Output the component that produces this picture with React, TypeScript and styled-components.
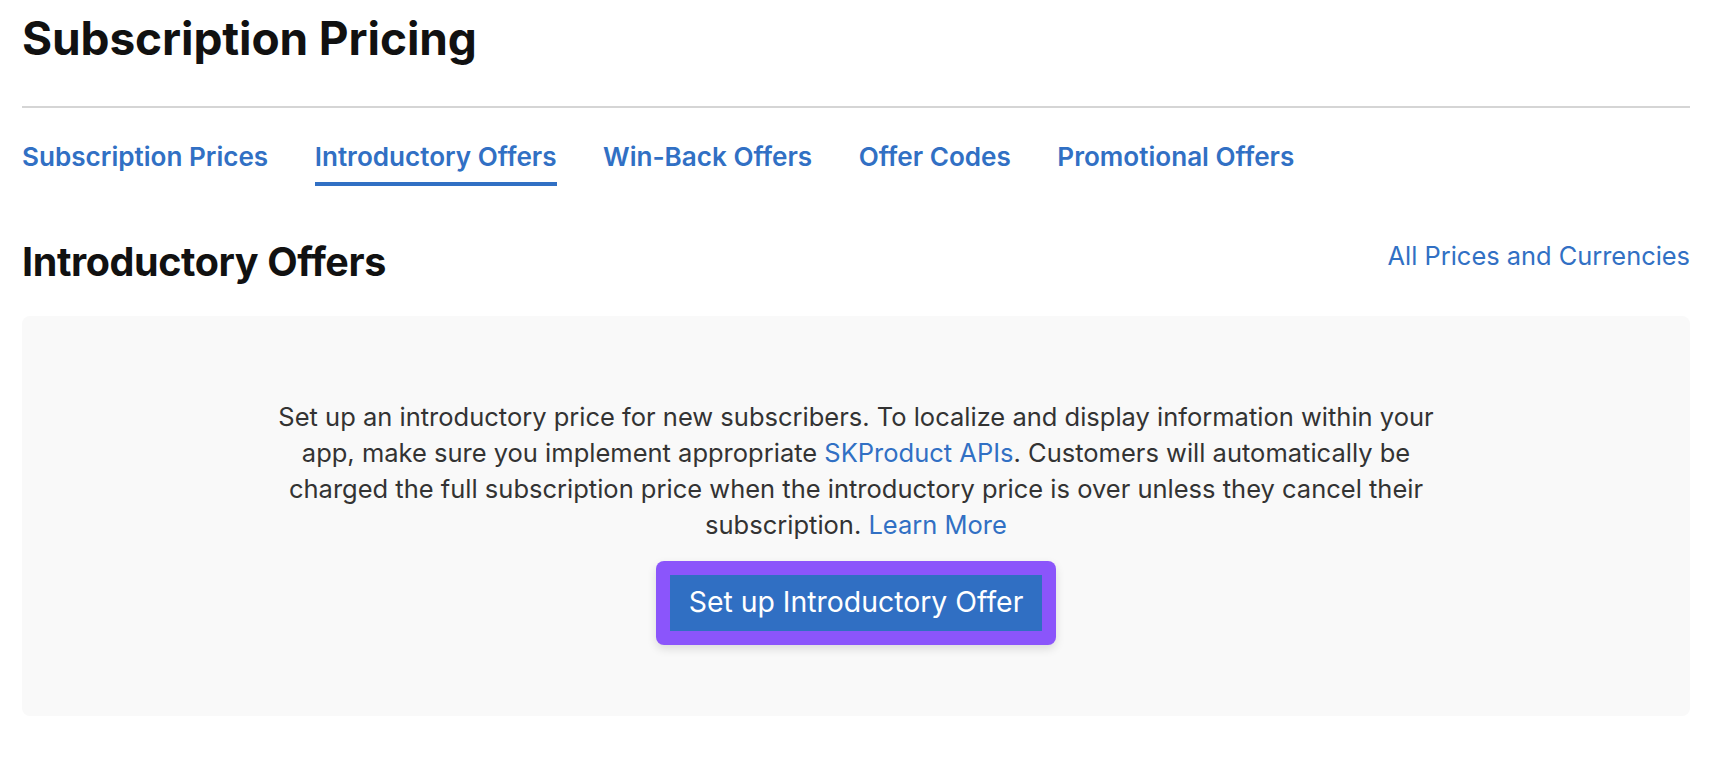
import styled, { createGlobalStyle } from "styled-components";

const GlobalStyle = createGlobalStyle`
  body {
    margin: 0;
    background: #ffffff;
    font-family: Inter, "Noto Sans", "Liberation Sans", sans-serif;
    -webkit-font-smoothing: antialiased;
  }
`;

const BLUE = "#3170c4";

const Page = styled.main`
  padding: 10px 32px 0 22px;
`;

const PageTitle = styled.h1`
  margin: 0;
  font-size: 46px;
  line-height: 56px;
  font-weight: 700;
  letter-spacing: -0.1px;
  color: #111111;
  padding-bottom: 40px;
  border-bottom: 2px solid #d5d5d5;
`;

const Tabs = styled.nav`
  display: flex;
  gap: 46.5px;
  margin-top: 33px;
`;

const Tab = styled.a<{ $active?: boolean }>`
  display: block;
  font-size: 26.1px;
  line-height: 32px;
  font-weight: 600;
  color: ${BLUE};
  text-decoration: none;
  padding-bottom: 9px;
  border-bottom: 4px solid ${(p) => (p.$active ? BLUE : "transparent")};
  cursor: pointer;
`;

const SectionHeader = styled.div`
  display: flex;
  justify-content: space-between;
  align-items: flex-start;
  margin-top: 52px;
`;

const SectionTitle = styled.h2`
  margin: 0;
  font-size: 39.5px;
  line-height: 48px;
  font-weight: 700;
  letter-spacing: -0.4px;
  color: #111111;
`;

const HeaderLink = styled.a`
  margin-top: 2px;
  font-size: 25.4px;
  line-height: 32px;
  color: ${BLUE};
  text-decoration: none;
  cursor: pointer;
`;

const Card = styled.section`
  margin-top: 30px;
  background: #f9f9f9;
  border-radius: 8px;
  padding: 83px 24px 71px;
  display: flex;
  flex-direction: column;
  align-items: center;
`;

const Description = styled.p`
  margin: 0;
  font-size: 25.5px;
  line-height: 36px;
  color: #333333;
  text-align: center;
  white-space: nowrap;
`;

const InlineLink = styled.a`
  color: ${BLUE};
  text-decoration: none;
  cursor: pointer;
`;

const Highlight = styled.div`
  margin-top: 18px;
  padding: 14px;
  background: #8b55fb;
  border-radius: 8px;
  box-shadow: 0 4px 10px rgba(0, 0, 0, 0.12);
`;

const PrimaryButton = styled.button`
  display: block;
  height: 56px;
  padding: 0 19px 3px;
  border: none;
  background: #306fc3;
  color: #ffffff;
  font-family: inherit;
  font-size: 28.4px;
  cursor: pointer;
`;

const tabs = [
  "Subscription Prices",
  "Introductory Offers",
  "Win-Back Offers",
  "Offer Codes",
  "Promotional Offers",
];

export default function App() {
  return (
    <>
      <GlobalStyle />
      <Page>
        <PageTitle>Subscription Pricing</PageTitle>
        <Tabs>
          {tabs.map((t) => (
            <Tab key={t} $active={t === "Introductory Offers"}>
              {t}
            </Tab>
          ))}
        </Tabs>
        <SectionHeader>
          <SectionTitle>Introductory Offers</SectionTitle>
          <HeaderLink>All Prices and Currencies</HeaderLink>
        </SectionHeader>
        <Card>
          <Description>
            Set up an introductory price for new subscribers. To localize and display information within your
            <br />
            app, make sure you implement appropriate <InlineLink>SKProduct APIs</InlineLink>. Customers will automatically be
            <br />
            charged the full subscription price when the introductory price is over unless they cancel their
            <br />
            subscription. <InlineLink>Learn More</InlineLink>
          </Description>
          <Highlight>
            <PrimaryButton>Set up Introductory Offer</PrimaryButton>
          </Highlight>
        </Card>
      </Page>
    </>
  );
}
